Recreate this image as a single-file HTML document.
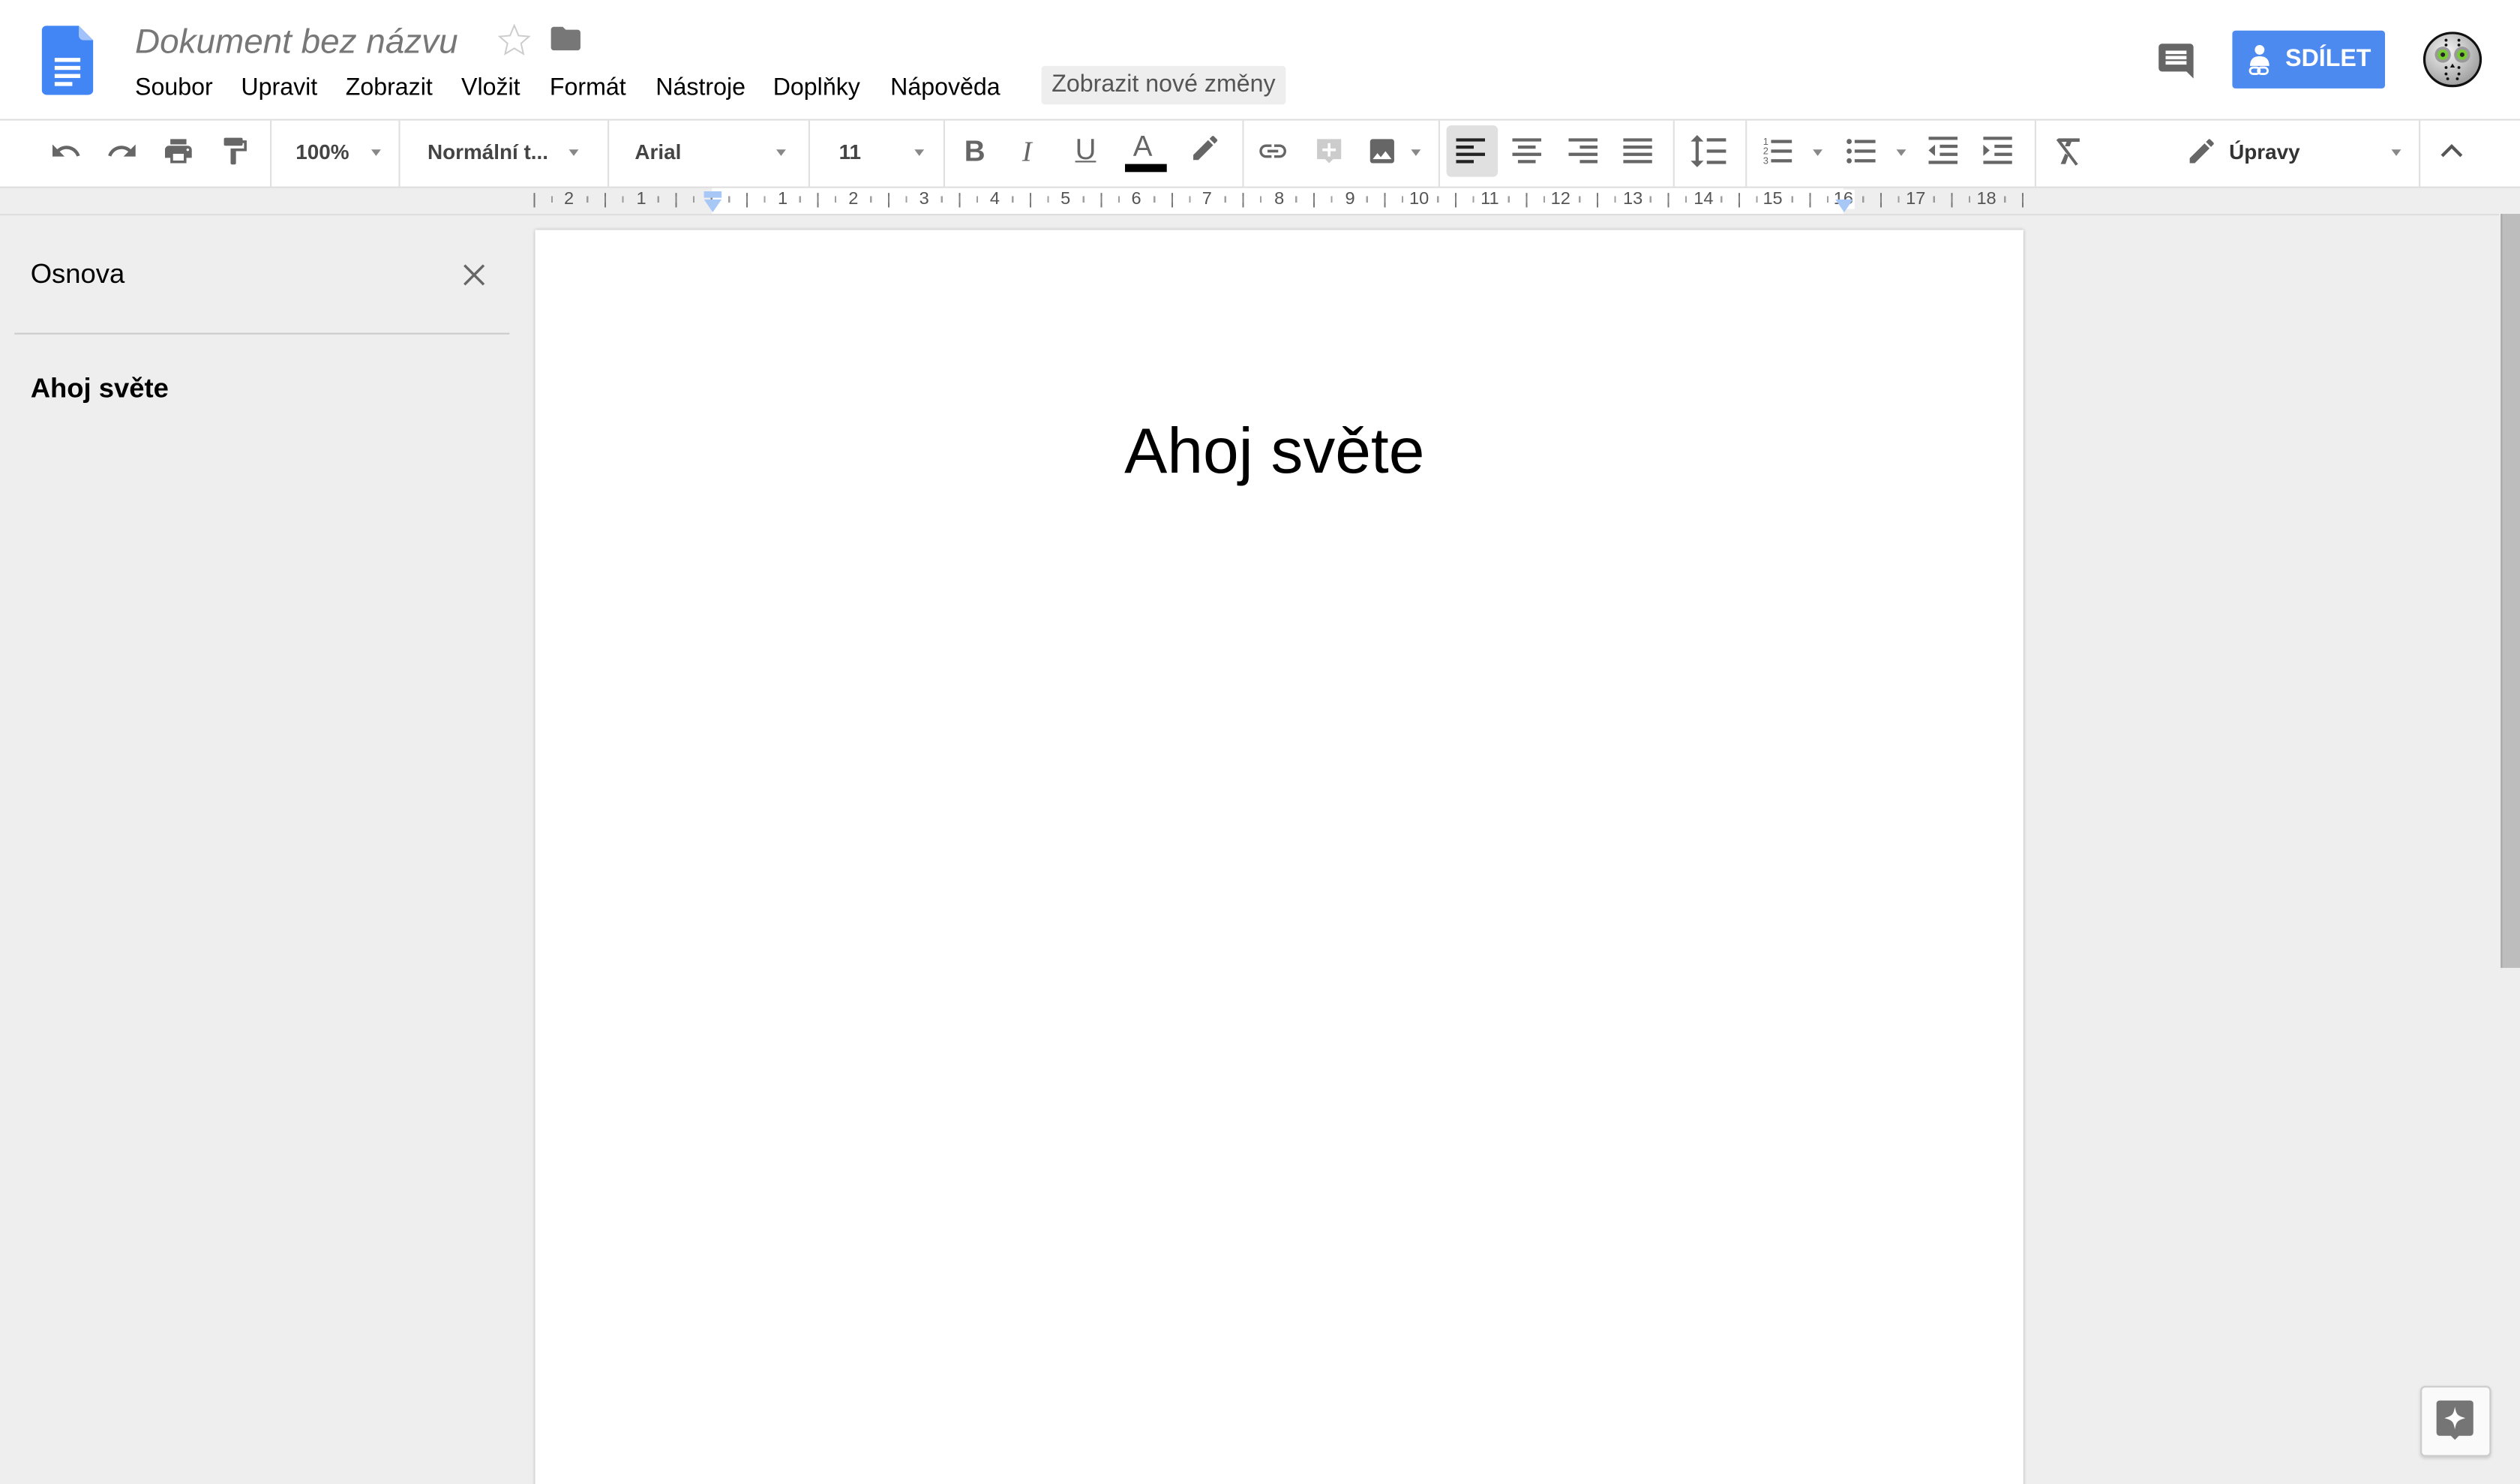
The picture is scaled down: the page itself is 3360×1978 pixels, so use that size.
<!DOCTYPE html>
<html><head><meta charset="utf-8">
<style>
html,body{margin:0;padding:0;width:3360px;height:1978px;overflow:hidden;background:#eee;}
#w{position:absolute;left:0;top:0;width:1568px;height:923px;transform:scale(2.142857,2.143012);transform-origin:0 0;background:#eee;font-family:"Liberation Sans",Arial,sans-serif;overflow:hidden;}
.a{position:absolute;}
.menu span{position:absolute;top:46px;font-size:15px;color:#000;}
.tb{position:absolute;top:75px;left:0;width:1568px;height:41px;background:#fff;border-bottom:1px solid #ddd;}
.sep{position:absolute;top:0;width:1px;height:41px;background:#e0e0e0;}
.ic{position:absolute;top:84px;width:20px;height:20px;fill:#666;}
.tx{position:absolute;top:87px;font-size:13px;font-weight:bold;color:#444;}
.dd{position:absolute;top:93px;width:0;height:0;border-left:3.5px solid transparent;border-right:3.5px solid transparent;border-top:4px solid #888;}
.rn{position:absolute;top:118px;font-size:11px;color:#555;width:14px;margin-left:-7px;text-align:center;}
</style></head><body><div id="w">
<div class="a" style="left:0;top:0;width:1568px;height:74px;background:#fff;border-bottom:1px solid #ddd;"></div>
<svg class="a" style="left:26px;top:16px" width="32" height="43" viewBox="0 0 32 43"><path d="M3 0h20l9 9v31a3 3 0 0 1-3 3H3a3 3 0 0 1-3-3V3a3 3 0 0 1 3-3z" fill="#4285f4"/><path d="M23 0l9 9h-6a3 3 0 0 1-3-3z" fill="#a1c2fa"/><rect x="8" y="20" width="16" height="2.5" fill="#fff"/><rect x="8" y="25" width="16" height="2.5" fill="#fff"/><rect x="8" y="30" width="16" height="2.5" fill="#fff"/><rect x="8" y="35" width="11" height="2.5" fill="#fff"/></svg>
<div class="a" style="left:84px;top:14px;font-size:21.4px;font-style:italic;color:#777;">Dokument bez názvu</div>
<svg class="a" style="left:309px;top:14px" width="22" height="22" viewBox="0 0 24 24"><path d="M12 2l2.9 6.9 7.1.6-5.4 4.7 1.6 7.1L12 17.5 5.8 21.3l1.6-7.1L2 9.5l7.1-.6z" fill="none" stroke="#ccc" stroke-width="1"/></svg>
<svg class="a" style="left:341px;top:13px" width="22" height="22" viewBox="0 0 24 24"><path fill="#777" d="M10 4H4c-1.1 0-2 .9-2 2v12c0 1.1.9 2 2 2h16c1.1 0 2-.9 2-2V8c0-1.1-.9-2-2-2h-8l-2-2z"/></svg>
<div class="menu"><span style="left:84px">Soubor</span><span style="left:150px">Upravit</span><span style="left:215px">Zobrazit</span><span style="left:287px">Vložit</span><span style="left:342px">Formát</span><span style="left:408px">Nástroje</span><span style="left:481px">Doplňky</span><span style="left:554px">Nápověda</span></div>
<div class="a" style="left:648px;top:41px;width:152px;height:24px;background:#eee;border-radius:2px;font-size:15px;color:#555;line-height:23px;text-align:center;">Zobrazit nové změny</div>
<svg class="a" style="left:1341px;top:25px" width="26" height="26" viewBox="0 0 24 24"><path fill="#666" d="M21.99 4c0-1.1-.89-2-1.99-2H4c-1.1 0-2 .9-2 2v12c0 1.1.9 2 2 2h14l4 4-.01-18zM18 14H6v-2h12v2zm0-3H6V9h12v2zm0-3H6V6h12v2z"/></svg>
<div class="a" style="left:1389px;top:19px;width:95px;height:36px;background:#4d8af0;border-radius:2px;"></div>
<svg class="a" style="left:1397px;top:27px" width="18" height="22" viewBox="0 0 18 22"><circle cx="9" cy="4" r="3" fill="#fff"/><path d="M3 14c0-4 2-6 6-6s6 2 6 6z" fill="#fff"/><rect x="3" y="15" width="6" height="4" rx="2" fill="none" stroke="#fff" stroke-width="1.3"/><rect x="8" y="15" width="6" height="4" rx="2" fill="none" stroke="#fff" stroke-width="1.3"/></svg>
<div class="a" style="left:1422px;top:28px;font-size:15px;font-weight:bold;color:#fff;">SDÍLET</div>
<svg class="a" style="left:1507px;top:19px" width="38" height="36" viewBox="0 0 38 36"><defs><radialGradient id="g" cx=".4" cy=".35" r=".7"><stop offset="0" stop-color="#f4f4f4"/><stop offset="1" stop-color="#999"/></radialGradient></defs><ellipse cx="19" cy="18" rx="17.5" ry="16.5" fill="url(#g)" stroke="#111" stroke-width="1.5"/><ellipse cx="13" cy="15" rx="5" ry="5" fill="#999"/><ellipse cx="25" cy="15" rx="5" ry="5" fill="#999"/><circle cx="13" cy="15" r="3.2" fill="#7c3"/><circle cx="25" cy="15" r="3.2" fill="#7c3"/><circle cx="13" cy="15" r="1.4" fill="#222"/><circle cx="25" cy="15" r="1.4" fill="#222"/><path d="M17.5 23l1.5-2.5 1.5 2.5z" fill="#111"/><g fill="#111"><circle cx="15" cy="6" r=".9"/><circle cx="23" cy="6" r=".9"/><circle cx="15" cy="9" r=".9"/><circle cx="23" cy="9" r=".9"/><circle cx="15" cy="23" r=".9"/><circle cx="23" cy="23" r=".9"/><circle cx="15" cy="27" r=".9"/><circle cx="23" cy="27" r=".9"/><circle cx="16" cy="30" r=".9"/><circle cx="22" cy="30" r=".9"/></g></svg>
<div class="tb">
<div class="sep" style="left:168px"></div><div class="sep" style="left:248px"></div><div class="sep" style="left:378px"></div><div class="sep" style="left:503px"></div><div class="sep" style="left:587px"></div><div class="sep" style="left:773px"></div><div class="sep" style="left:895px"></div><div class="sep" style="left:1041px"></div><div class="sep" style="left:1086px"></div><div class="sep" style="left:1266px"></div><div class="sep" style="left:1505px"></div>
</div>
<svg class="ic" style="left:31px" viewBox="0 0 24 24"><path d="M12.5 8c-2.65 0-5.050.99-6.9 2.6L2 7v9h9l-3.62-3.62c1.39-1.16 3.16-1.88 5.12-1.88 3.54 0 6.55 2.31 7.6 5.5l2.37-.78C21.08 11.03 17.15 8 12.5 8z"/></svg>
<svg class="ic" style="left:66px" viewBox="0 0 24 24"><path d="M18.4 10.6C16.55 8.99 14.15 8 11.5 8c-4.65 0-8.58 3.03-9.96 7.22L3.9 16c1.05-3.19 4.05-5.5 7.6-5.5 1.95 0 3.73.72 5.12 1.88L13 16h9V7l-3.6 3.6z"/></svg>
<svg class="ic" style="left:101px" viewBox="0 0 24 24"><path d="M19 8H5c-1.66 0-3 1.34-3 3v6h4v4h12v-4h4v-6c0-1.66-1.34-3-3-3zm-3 11H8v-5h8v5zm3-7c-.55 0-1-.45-1-1s.45-1 1-1 1 .45 1 1-.45 1-1 1zm-1-9H6v4h12V3z"/></svg>
<svg class="ic" style="left:136px" viewBox="0 0 24 24"><path d="M18 4V3c0-.55-.45-1-1-1H5c-.55 0-1 .45-1 1v4c0 .55.45 1 1 1h12c.55 0 1-.45 1-1V6h1v4H9v11c0 .55.45 1 1 1h2c.55 0 1-.45 1-1v-9h8V4h-3z"/></svg>
<div class="tx" style="left:184px">100%</div><div class="dd" style="left:231px"></div>
<div class="tx" style="left:266px">Normální t...</div><div class="dd" style="left:354px"></div>
<div class="tx" style="left:395px">Arial</div><div class="dd" style="left:483px"></div>
<div class="tx" style="left:522px">11</div><div class="dd" style="left:569px"></div>
<div class="a" style="left:600px;top:84px;font-size:18px;font-weight:bold;color:#666;">B</div>
<div class="a" style="left:636px;top:84px;font-size:18px;font-style:italic;font-family:'Liberation Serif',serif;color:#666;">I</div>
<div class="a" style="left:669px;top:83px;font-size:18px;color:#666;text-decoration:underline;">U</div>
<div class="a" style="left:705px;top:81px;font-size:18px;color:#666;">A</div>
<div class="a" style="left:700px;top:102px;width:26px;height:5px;background:#000;"></div>
<svg class="ic" style="left:740px;top:82px" viewBox="0 0 24 24"><path d="M3 17.25V21h3.75L17.81 9.94l-3.75-3.75L3 17.25zM20.71 7.04c.39-.39.39-1.02 0-1.41l-2.34-2.34c-.39-.39-1.02-.39-1.41 0l-1.83 1.83 3.75 3.75 1.83-1.83z"/></svg>
<svg class="ic" style="left:782px" viewBox="0 0 24 24"><path d="M3.9 12c0-1.71 1.39-3.1 3.1-3.1h4V7H7c-2.76 0-5 2.24-5 5s2.24 5 5 5h4v-1.9H7c-1.71 0-3.1-1.39-3.1-3.1zM8 13h8v-2H8v2zm9-6h-4v1.9h4c1.71 0 3.1 1.39 3.1 3.1s-1.39 3.1-3.1 3.1h-4V17h4c2.76 0 5-2.24 5-5s-2.24-5-5-5z"/></svg>
<svg class="ic" style="left:817px;fill:#ccc" viewBox="0 0 24 24"><path d="M3 3h18v15h-6l-3 3-3-3H3zM11 6v4H7v2h4v4h2v-4h4v-2h-4V6z" fill-rule="evenodd"/></svg>
<svg class="ic" style="left:850px" viewBox="0 0 24 24"><path d="M21 19V5c0-1.1-.9-2-2-2H5c-1.1 0-2 .9-2 2v14c0 1.1.9 2 2 2h14c1.1 0 2-.9 2-2zM8.5 13.5l2.5 3.01L14.5 12l4.5 6H5l3.5-4.5z"/></svg>
<div class="dd" style="left:878px"></div>
<div class="a" style="left:900px;top:78px;width:32px;height:32px;background:#e0e0e0;border-radius:3px;"></div>
<svg class="a" style="left:906px;top:86px" width="18" height="16" viewBox="0 0 18 16"><g fill="#222"><rect x="0" y="0" width="18" height="2"/><rect x="0" y="4.5" width="11" height="2"/><rect x="0" y="9" width="18" height="2"/><rect x="0" y="13.5" width="11" height="2"/></g></svg>
<svg class="a" style="left:941px;top:86px" width="18" height="16" viewBox="0 0 18 16"><g fill="#666"><rect x="0" y="0" width="18" height="2"/><rect x="3.5" y="4.5" width="11" height="2"/><rect x="0" y="9" width="18" height="2"/><rect x="3.5" y="13.5" width="11" height="2"/></g></svg>
<svg class="a" style="left:976px;top:86px" width="18" height="16" viewBox="0 0 18 16"><g fill="#666"><rect x="0" y="0" width="18" height="2"/><rect x="7" y="4.5" width="11" height="2"/><rect x="0" y="9" width="18" height="2"/><rect x="7" y="13.5" width="11" height="2"/></g></svg>
<svg class="a" style="left:1010px;top:86px" width="18" height="16" viewBox="0 0 18 16"><g fill="#666"><rect x="0" y="0" width="18" height="2"/><rect x="0" y="4.5" width="18" height="2"/><rect x="0" y="9" width="18" height="2"/><rect x="0" y="13.5" width="18" height="2"/></g></svg>
<svg class="a" style="left:1052px;top:84px" width="22" height="20" viewBox="0 0 22 20"><g fill="#666"><path d="M4 0l4 4H5v12h3l-4 4-4-4h3V4H0z"/><rect x="10" y="2" width="12" height="2"/><rect x="10" y="9" width="12" height="2"/><rect x="10" y="16" width="12" height="2"/></g></svg>
<svg class="a" style="left:1097px;top:85px" width="18" height="18" viewBox="0 0 18 18"><g fill="#666"><text x="0" y="5" font-size="6" font-family="Liberation Sans">1</text><text x="0" y="11" font-size="6" font-family="Liberation Sans">2</text><text x="0" y="17" font-size="6" font-family="Liberation Sans">3</text><rect x="5" y="2" width="13" height="2"/><rect x="5" y="8" width="13" height="2"/><rect x="5" y="14" width="13" height="2"/></g></svg>
<div class="dd" style="left:1128px"></div>
<svg class="a" style="left:1149px;top:85px" width="18" height="18" viewBox="0 0 18 18"><g fill="#666"><circle cx="1.6" cy="3" r="1.6"/><circle cx="1.6" cy="9" r="1.6"/><circle cx="1.6" cy="15" r="1.6"/><rect x="5" y="2" width="13" height="2"/><rect x="5" y="8" width="13" height="2"/><rect x="5" y="14" width="13" height="2"/></g></svg>
<div class="dd" style="left:1180px"></div>
<svg class="a" style="left:1200px;top:85px" width="18" height="18" viewBox="0 0 18 18"><g fill="#666"><rect x="0" y="0" width="18" height="2"/><rect x="7" y="5" width="11" height="2"/><rect x="7" y="10" width="11" height="2"/><rect x="0" y="15" width="18" height="2"/><path d="M4 5v7L0 8.5z"/></g></svg>
<svg class="a" style="left:1234px;top:85px" width="18" height="18" viewBox="0 0 18 18"><g fill="#666"><rect x="0" y="0" width="18" height="2"/><rect x="7" y="5" width="11" height="2"/><rect x="7" y="10" width="11" height="2"/><rect x="0" y="15" width="18" height="2"/><path d="M0 5v7l4-3.5z"/></g></svg>
<svg class="a" style="left:1278px;top:86px" width="18" height="18" viewBox="0 0 18 18"><g fill="#666"><rect x="3" y="0" width="13" height="2.2"/><path d="M8 2h3l-1.2 3h-3z"/><path d="M1.5 1l1.5-1 12 16-1.5 1z"/><path d="M7 9.5l2 1.3-1.8 5.2h-3z"/></g></svg>
<svg class="ic" style="left:1360px;top:84px" viewBox="0 0 24 24"><path d="M3 17.25V21h3.75L17.81 9.94l-3.75-3.75L3 17.25zM20.71 7.04c.39-.39.39-1.02 0-1.41l-2.34-2.34c-.39-.39-1.02-.39-1.41 0l-1.83 1.83 3.75 3.75 1.83-1.83z"/></svg>
<div class="tx" style="left:1387px;color:#333">Úpravy</div><div class="dd" style="left:1488px"></div>
<svg class="a" style="left:1518px;top:88px" width="15" height="11" viewBox="0 0 15 11"><path d="M1.5 9l6-6 6 6" fill="none" stroke="#555" stroke-width="2"/></svg>
<div class="a" style="left:0;top:117px;width:1568px;height:16px;background:#eee;border-bottom:1px solid #ddd;"></div>
<div class="a" style="left:443px;top:117px;width:704px;height:16px;background:#fff;"></div>
<div class="a" style="left:332px;top:120px;width:929px;height:9px;background:repeating-linear-gradient(90deg,#777 0,#777 1px,transparent 1px,transparent 22.05px);"></div>
<div class="a" style="left:343px;top:122px;width:918px;height:4px;background:repeating-linear-gradient(90deg,#888 0,#888 1px,transparent 1px,transparent 11.025px);opacity:.8"></div>
<div class="rn" style="left:354px;background:#eee">2</div><div class="rn" style="left:399px;background:#eee">1</div>
<div class="rn" style="left:487px;background:#fff">1</div><div class="rn" style="left:531px;background:#fff">2</div><div class="rn" style="left:575px;background:#fff">3</div><div class="rn" style="left:619px;background:#fff">4</div><div class="rn" style="left:663px;background:#fff">5</div><div class="rn" style="left:707px;background:#fff">6</div><div class="rn" style="left:751px;background:#fff">7</div><div class="rn" style="left:796px;background:#fff">8</div><div class="rn" style="left:840px;background:#fff">9</div><div class="rn" style="left:883px;background:#fff">10</div><div class="rn" style="left:927px;background:#fff">11</div><div class="rn" style="left:971px;background:#fff">12</div><div class="rn" style="left:1016px;background:#fff">13</div><div class="rn" style="left:1060px;background:#fff">14</div><div class="rn" style="left:1103px;background:#fff">15</div><div class="rn" style="left:1147px;background:#fff">16</div><div class="rn" style="left:1192px;background:#eee">17</div><div class="rn" style="left:1236px;background:#eee">18</div>
<div class="a" style="left:438px;top:119px;width:11px;height:4px;background:#a7c7f7;"></div>
<svg class="a" style="left:438px;top:124px" width="11" height="8" viewBox="0 0 11 8"><path d="M0 0h11L5.5 8z" fill="#a7c7f7"/></svg>
<svg class="a" style="left:1142px;top:124px" width="11" height="8" viewBox="0 0 11 8"><path d="M0 0h11L5.5 8z" fill="#a7c7f7"/></svg>
<div class="a" style="left:19px;top:161px;font-size:17px;color:#000;">Osnova</div>
<svg class="a" style="left:288px;top:164px" width="14" height="14" viewBox="0 0 14 14"><path d="M1 1l12 12M13 1L1 13" stroke="#666" stroke-width="1.6"/></svg>
<div class="a" style="left:9px;top:207px;width:308px;height:1px;background:#ccc;"></div>
<div class="a" style="left:19px;top:232px;font-size:17px;font-weight:bold;color:#000;">Ahoj světe</div>
<div class="a" style="left:333px;top:143px;width:926px;height:800px;background:#fff;box-shadow:0 0 2px rgba(0,0,0,.25);"></div>
<div class="a" style="left:330px;top:257px;width:926px;text-align:center;font-size:40px;color:#000;line-height:48px;">Ahoj světe</div>
<div class="a" style="left:1555px;top:133px;width:13px;height:790px;background:#eee;"></div>
<div class="a" style="left:1556px;top:133px;width:11px;height:469px;background:#bdbdbd;border-left:1px solid #a8a8a8;"></div>
<div class="a" style="left:1506px;top:862px;width:42px;height:42px;background:#fafafa;border:1px solid #ccc;border-radius:3px;box-shadow:0 1px 2px rgba(0,0,0,.15);"></div>
<svg class="a" style="left:1516px;top:871px" width="23" height="25" viewBox="0 0 23 25"><path d="M2 0h19a2 2 0 0 1 2 2v18a2 2 0 0 1-2 2h-7l-2.5 2.5L9 22H2a2 2 0 0 1-2-2V2a2 2 0 0 1 2-2z" fill="#757575"/><path d="M11.5 4C12.5 9 13 9.5 18 11 13 12.5 12.5 13 11.5 18 10.5 13 10 12.5 5 11 10 9.5 10.5 9 11.5 4z" fill="#fff"/></svg>
</div></body></html>
